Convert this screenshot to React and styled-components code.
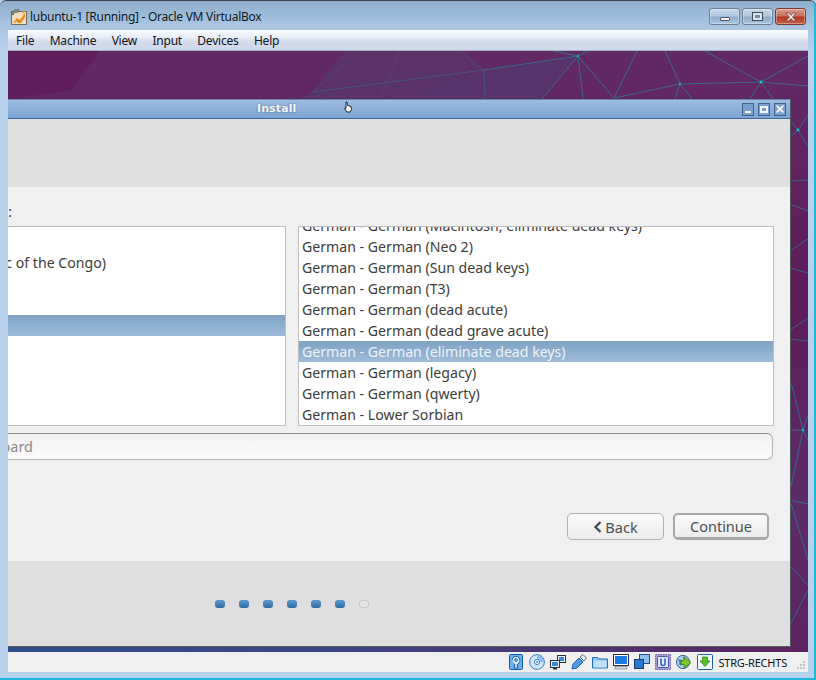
import React from "react";
import styled, { createGlobalStyle } from "styled-components";

const Global = createGlobalStyle`
  html, body { margin: 0; padding: 0; background: #b8d0ea; }
  * { box-sizing: border-box; }
`;

const Frame = styled.div`
  width: 816px; height: 680px; overflow: hidden;
  display: flex; flex-direction: column;
  padding: 0 0 0 8px;
  background: linear-gradient(180deg, #8eaecb 0, #a6c3df 22px, #b9d2ec 50px, #b9d2ec 100%);
  border-top: 1px solid #3a4650;
  border-top-left-radius: 6px; border-top-right-radius: 6px;
  box-shadow: inset -2px -2px 0 #1fb8d6;
  font-family: "Noto Sans", "Open Sans", sans-serif;
`;
const TitleBar = styled.div`
  height: 29px; margin-left: -8px; padding: 2px 10px 0 11px;
  display: flex; align-items: center;
`;
const AppLogo = styled.svg`width: 16px; height: 16px; flex: none; margin-right: 3px;`;
const TitleText = styled.span`
  font-size: 12px; color: #10181f; flex: 1; white-space: nowrap; letter-spacing: -0.27px;
`;
const CaptionButtons = styled.div`display: flex; gap: 2px;`;
const CaptionBtn = styled.div`
  width: 31px; height: 17px; border-radius: 3px;
  border: 1px solid ${p => (p.$close ? "#7a3a32" : "#6d7f92")};
  background: ${p => p.$close
    ? "linear-gradient(180deg,#dd9a8e 0,#c9705f 45%,#b03a22 55%,#c85e45 100%)"
    : "linear-gradient(180deg,#c6d8ea 0,#b1c8de 45%,#8fadcb 55%,#a9c6e0 100%)"};
  box-shadow: inset 0 0 0 1px rgba(255,255,255,.35);
  display: flex; align-items: center; justify-content: center;
`;
const MinGlyph = styled.div`width: 10px; height: 4px; margin-top: 5px; background: #f2f2f2; border: 1px solid #4f5a68; border-radius: 1px;`;
const MaxGlyph = styled.div`width: 11px; height: 9px; background: #dfe6ee; border: 1px solid #3f4a58; display:flex; align-items:center; justify-content:center;
  &::after { content:""; width: 5px; height: 3px; background:#6f8caa; }`;
const CloseGlyph = styled.svg`width: 12px; height: 10px;`;
const MenuBar = styled.div`
  width: 800px; height: 21px; display: flex; gap: 15.4px; align-items: center; padding-left: 8px;
  background: linear-gradient(180deg,#f8fafd 0,#e9eef7 35%,#d2daec 60%,#d0d9ec 100%);
  border-bottom: 1px solid #a5adc0;
  font-size: 12px; color: #10131a; letter-spacing: -0.22px;
`;
const Desktop = styled.div`
  position: relative; width: 800px; height: 601px; overflow: hidden; flex: none;
  background: #5f2660;
`;
const Wallpaper = styled.svg`position: absolute; inset: 0; width: 800px; height: 601px;`;
const InstallWindow = styled.div`
  position: absolute; left: 0; top: 48px; width: 783px; height: 548px;
  display: flex; flex-direction: column;
  border-right: 1px solid #4f5a5f; border-bottom: 1px solid #5a5f62;
`;
const WinTitle = styled.div`
  height: 20px; flex: none; display: flex; align-items: center; justify-content: flex-end; gap: 4px; padding-right: 4px;
  position: relative;
  background: linear-gradient(180deg,#9dbde2 0,#7da3d1 100%);
  border-top: 1px solid #68849f; border-bottom: 1px solid #43699b;
`;
const WinTitleText = styled.span`
  position: absolute; left: 249px; top: 2px;
  font: bold 11px "DejaVu Sans", sans-serif; color: #f2f5f8; letter-spacing: .1px;
  text-shadow: 0 0 2px rgba(70,90,120,.8);
`;
const WinBtn = styled.div`
  width: 12px; height: 13px; background: #7ba0cc; border: 1px solid #3f628f;
  display: flex; align-items: center; justify-content: center; color: #eef3f9;
`;
const WinMin = styled.div`width: 6px; height: 2px; margin-top: 5px; background: #f4f7fa;`;
const WinMax = styled.div`width: 8px; height: 7px; border: 2px solid #f4f7fa; background: #7ba0cc;`;
const WinClose = styled.svg`width: 8px; height: 8px;`;
const Banner = styled.div`height: 68px; flex: none; background: #e0e0e0;`;
const Content = styled.div`
  flex: 1; background: #f0f0f0; padding-right: 16px; display: flex; flex-direction: column;
  color: #3c3c3c; font-size: 14.13px; font-family: "Noto Sans", sans-serif;
`;
const Clip = styled.div`
  width: ${p => p.$w}px; height: 21px; line-height: 21px; display: flex; justify-content: flex-end; overflow: hidden; white-space: nowrap;
  flex: none;
  color: ${p => p.$muted ? "#8a8a8a" : "inherit"};
  ${p => p.$muted && "font-size: 14.5px;"}
`;
const LabelRow = styled.div`height: 39px; padding-top: 14px;`;
const Lists = styled.div`display: grid; grid-template-columns: 278px 476px; gap: 12px; height: 200px;`;
const ListBox = styled.div`
  background: #fff; border: 1px solid #bdbdbd; overflow: hidden;
  ${p => p.$clipLeft && "border-left: none; padding-top: 4px;"}
`;
const ScrolledRows = styled.div`margin-top: -12px;`;
const Row = styled.div`
  height: 21px; line-height: 21px; padding-left: ${p => p.$pad || 0}px; white-space: nowrap;
  ${p => p.$selected && "background: linear-gradient(180deg,#7fa2c3 0,#9dbcd9 100%); color: #f0f3f6;"}
`;
const SearchField = styled.div`
  margin-top: 7px; height: 27px; width: 765px; display: flex; align-items: center;
  background: linear-gradient(180deg,#f2f2f2 0,#fbfbfb 100%);
  border: 1px solid #b5b5b5; border-top-color: #8f8f8f; border-left: none;
  border-radius: 0 6px 6px 0;
`;
const Actions = styled.div`
  margin-top: 53px; display: flex; justify-content: flex-end; gap: 9px; padding-right: 5px;
`;
const Button = styled.div`
  width: 97px; height: 27px; border-radius: 5px; display: flex; align-items: center; justify-content: center; gap: 3px;
  font-size: 14.5px;
  background: linear-gradient(180deg,#fafafa 0,#ececec 100%);
  border: 1px solid #b2b2b2;
  ${p => p.$primary && "width: 96px; border: 2px solid #a8a8a8; border-bottom-width: 3px;"}
  color: #4a4f55;
`;
const Footer = styled.div`
  height: 85px; flex: none; background: #dfdfdf; display: flex; gap: 14px; padding: 39px 0 0 207px;
`;
const Dot = styled.div`
  width: 10px; height: 8px; border-radius: 3px;
  background: ${p => p.$off ? "#e4e4e4" : "linear-gradient(180deg,#5f97cc 0,#2c69a6 100%)"};
  border: ${p => p.$off ? "1px solid #c8c8c8" : "none"};
`;
const Cursor = styled.svg`position: absolute; left: 335px; top: 50px; width: 10px; height: 12px;`;
const StatusBar = styled.div`
  width: 800px; height: 20px; flex: none; background: #f0f0f0;
  display: flex; align-items: center; justify-content: flex-end; position: relative;
  padding-right: 21px; gap: 5px;
  font-size: 11px; color: #0c1420; letter-spacing: -0.2px;
`;
const StatusIcon = styled.svg`width: 16px; height: 16px; flex: none;`;
const HostKey = styled.span`white-space: nowrap;`;
const Grip = styled.svg`position: absolute; right: 2px; bottom: 2px; width: 10px; height: 10px;`;

const L = [
  [578,56,484,70],[484,70,460,51],[484,70,485,99],[484,70,313,92],[578,56,553,51],[578,56,588,51],
  [578,56,542,99],[578,56,583,99],[578,56,614,98],[614,98,637,51],[614,98,680,84],[680,84,665,51],
  [680,84,675,99],[680,84,692,99],[680,84,761,82],[761,82,705,51],[761,82,808,56],[761,82,808,86],
  [761,82,750,99],[761,82,773,99],
  [798,130,808,115],[798,130,808,147],[798,130,790,120],[798,130,790,137],
  [790,181,808,180],[790,204,808,211],[790,251,808,239],[790,268,808,273],[790,330,808,318],[790,339,808,341],
  [790,380,793,390],[793,390,803,430],[803,430,808,415],[803,430,808,440],[803,430,790,430],[803,430,791,487],
  [790,500,808,504],[791,503,808,560],[791,567,808,585],[808,590,791,623],
  [313,92,346,51],[313,92,359,51],[313,92,300,99],[313,92,325,99],[380,99,400,51],
];

const rightRows = [
  "German - German (Macintosh, eliminate dead keys)",
  "German - German (Neo 2)",
  "German - German (Sun dead keys)",
  "German - German (T3)",
  "German - German (dead acute)",
  "German - German (dead grave acute)",
  "German - German (eliminate dead keys)",
  "German - German (legacy)",
  "German - German (qwerty)",
  "German - Lower Sorbian",
];

const Disk = () => (
  <StatusIcon viewBox="0 0 16 16">
    <rect x="1.5" y="0.5" width="13" height="15" rx="1" fill="#6db0ea" stroke="#0e5aa8" />
    <path d="M4 6a4 4 0 1 1 7 3l-2 2 1 3H6l1-4" fill="#d7ebfb" stroke="#0e5aa8" />
    <circle cx="8" cy="6" r="1.4" fill="#6db0ea" stroke="#0e5aa8" strokeWidth=".7" />
  </StatusIcon>
);
const Disc = () => (
  <StatusIcon viewBox="0 0 16 16">
    <circle cx="8" cy="8" r="7.4" fill="#cfe6fa" stroke="#3b7fc4" />
    <path d="M8 1a7 7 0 0 1 7 7H11a3 3 0 0 0-3-3z" fill="#88bdf0" />
    <circle cx="8" cy="8" r="2.6" fill="#f4fbff" stroke="#3b7fc4" />
    <circle cx="8" cy="8" r=".9" fill="#3b7fc4" />
  </StatusIcon>
);
const Net = () => (
  <StatusIcon viewBox="0 0 16 16">
    <rect x="7.5" y="1.5" width="8" height="7" fill="#eef5fc" stroke="#24303c" />
    <rect x="9" y="3" width="5" height="4" fill="#3b86d8" />
    <rect x="0.5" y="6.5" width="9" height="7" fill="#eef5fc" stroke="#24303c" />
    <rect x="2" y="8" width="6" height="4" fill="#3b86d8" />
    <rect x="3" y="14" width="4" height="1.5" fill="#24303c" />
  </StatusIcon>
);
const Usb = () => (
  <StatusIcon viewBox="0 0 16 16">
    <path d="M1 15l1-5 6-6 4 4-6 6z" fill="#4f9ae6" stroke="#1a62b0" />
    <path d="M9 3l3-2.5 3.5 3.500L13 7z" fill="#e8eef4" stroke="#5b6a78" />
  </StatusIcon>
);
const Folder = () => (
  <StatusIcon viewBox="0 0 16 16">
    <path d="M.5 14V3.500h5l1 1.500h9v9z" fill="#8fc6f5" stroke="#1c6dbd" />
    <rect x="1.5" y="6.500" width="13" height="7" fill="#bfe0fb" />
  </StatusIcon>
);
const Display = () => (
  <StatusIcon viewBox="0 0 16 16">
    <rect x="0.5" y="0.5" width="15" height="11" fill="#fff" stroke="#24303c" />
    <rect x="2" y="2" width="12" height="8" fill="#1f7ae0" />
    <rect x="2" y="12.500" width="12" height="2.500" fill="#d0d6dc" stroke="#5c6670" strokeWidth=".5" />
  </StatusIcon>
);
const Capture = () => (
  <StatusIcon viewBox="0 0 16 16">
    <rect x="5.500" y="0.5" width="10" height="9" fill="#8cc0f2" stroke="#1f4f86" />
    <rect x="0.5" y="5.500" width="9" height="9" fill="#2a78d4" stroke="#1f3f6a" />
  </StatusIcon>
);
const Chip = () => (
  <StatusIcon viewBox="0 0 16 16">
    <rect x="0.5" y="0.5" width="15" height="15" fill="#a99ad8" stroke="#6a5ab0" strokeDasharray="1.5 1" />
    <rect x="2.500" y="2.500" width="11" height="11" rx="1" fill="#dfe7fb" stroke="#4c55a8" />
    <path d="M6 4.500v5a2 2 0 0 0 4 0v-5" fill="none" stroke="#3c62b8" strokeWidth="1.6" />
  </StatusIcon>
);
const Globe = () => (
  <StatusIcon viewBox="0 0 16 16">
    <circle cx="7" cy="8" r="6.600" fill="#a9d2f4" stroke="#3a5f8c" />
    <path d="M2 5l4 1 1 3-3 3zM7 2l3 2-2 2z" fill="#4c7fb4" />
    <path d="M8 3l7 5.500-7 5.500v-3.500H5v-4h3z" fill="#7cc82e" stroke="#3f7a10" strokeWidth=".8" />
  </StatusIcon>
);
const Guest = () => (
  <StatusIcon viewBox="0 0 16 16">
    <rect x="0.5" y="0.5" width="15" height="15" rx="1" fill="#f2f8fd" stroke="#1a5fa8" />
    <path d="M5.500 3h5v4h2.500L8 12.500 3 7h2.500z" fill="#58c030" stroke="#2c7a12" strokeWidth=".7" />
  </StatusIcon>
);

export default function App() {
  return (
    <Frame>
      <Global />
      <TitleBar>
        <AppLogo viewBox="0 0 16 16">
          <rect x="0.5" y="2.500" width="15" height="13" fill="#f0e0c0" stroke="#7a6a58" />
          <path d="M2 14l4-5 3 2 5-7v4l-4 6H7L5 12l-1 2z" fill="#e88a1c" />
          <path d="M1 3l3-2.500h4l-1 3H3v2H1z" fill="#8c8c8c" stroke="#555" strokeWidth=".5" />
          <path d="M11 3l3-1-1 4z" fill="#f6b44a" />
        </AppLogo>
        <TitleText>lubuntu-1 [Running] - Oracle VM VirtualBox</TitleText>
        <CaptionButtons>
          <CaptionBtn><MinGlyph /></CaptionBtn>
          <CaptionBtn><MaxGlyph /></CaptionBtn>
          <CaptionBtn $close>
            <CloseGlyph viewBox="0 0 12 10">
              <path d="M1 1h2.500L6 3.500 8.500 1H11L7.500 5 11 9H8.500L6 6.500 3.500 9H1l3.500-4z" fill="#f4f4f4" stroke="#5b3a36" strokeWidth=".7" />
            </CloseGlyph>
          </CaptionBtn>
        </CaptionButtons>
      </TitleBar>
      <MenuBar>
        <span>File</span><span>Machine</span><span>View</span><span>Input</span><span>Devices</span><span>Help</span>
      </MenuBar>
      <Desktop>
        <Wallpaper viewBox="8 51 800 601">
          <defs>
            <linearGradient id="strip" x1="0" x2="0" y1="0" y2="1">
              <stop offset="0" stopColor="#612a63" />
              <stop offset=".4" stopColor="#5e1b5a" />
              <stop offset=".75" stopColor="#5c2b66" />
              <stop offset="1" stopColor="#5d2260" />
            </linearGradient>
            <linearGradient id="base" x1="0" x2="1" y1="0" y2="0">
              <stop offset="0" stopColor="#2f4d8a" />
              <stop offset=".4" stopColor="#3b4684" />
              <stop offset="1" stopColor="#5b2560" />
            </linearGradient>
          </defs>
          <rect x="8" y="51" width="800" height="601" fill="url(#strip)" />
          <polygon points="8,51 100,51 72,90 8,99" fill="#601f5c" />
          <polygon points="313,92 346,51 460,51 484,70 380,99 300,99" fill="#5a3268" />
          <polygon points="380,99 484,70 578,56 542,99" fill="#583369" />
          <rect x="8" y="646" width="783" height="6" fill="url(#base)" />
          {L.map(([a, b, c, d], i) => (
            <line key={i} x1={a} y1={b} x2={c} y2={d} stroke="#2e7c94" strokeOpacity={a < 460 ? 0.25 : a < 520 ? 0.45 : 0.75} strokeWidth="1" />
          ))}
          <circle cx="578" cy="56" r="1.2" fill="#20a8b8" />
          <circle cx="680" cy="84" r="1.2" fill="#20a8b8" />
          <circle cx="761" cy="82" r="1.4" fill="#10c8d0" />
          <circle cx="798" cy="130" r="1.4" fill="#10c8d0" />
          <circle cx="803" cy="430" r="1.4" fill="#10b0c0" />
        </Wallpaper>
        <InstallWindow>
          <WinTitle>
            <WinTitleText>Install</WinTitleText>
            <WinBtn><WinMin /></WinBtn>
            <WinBtn><WinMax /></WinBtn>
            <WinBtn>
              <WinClose viewBox="0 0 8 8"><path d="M0 1l1-1 3 2.500L7 0l1 1-2.500 3L8 7 7 8 4 5.500 1 8 0 7l2.500-3z" fill="#f4f7fa" /></WinClose>
            </WinBtn>
          </WinTitle>
          <Banner />
          <Content>
            <LabelRow><Clip $w={4}>Choose your keyboard layout:</Clip></LabelRow>
            <Lists>
              <ListBox $clipLeft>
                <Row />
                <Row><Clip $w={98}>French (Democratic Republic of the Congo)</Clip></Row>
                <Row /><Row />
                <Row $selected />
              </ListBox>
              <ListBox>
                <ScrolledRows>
                  {rightRows.map((r, i) => (
                    <Row key={r} $pad={3} $selected={i === 6}>{r}</Row>
                  ))}
                </ScrolledRows>
              </ListBox>
            </Lists>
            <SearchField><Clip $w={25} $muted>Type here to test your keyboard</Clip></SearchField>
            <Actions>
              <Button>
                <svg width="9" height="12" viewBox="0 0 9 12"><path d="M7.500 1L2.500 6l5 5" fill="none" stroke="#4a4f55" strokeWidth="2.400" /></svg>
                Back
              </Button>
              <Button $primary>Continue</Button>
            </Actions>
          </Content>
          <Footer>
            {[0, 1, 2, 3, 4, 5].map(i => <Dot key={i} />)}
            <Dot $off />
          </Footer>
        </InstallWindow>
        <Cursor viewBox="0 0 10 12">
          <path d="M3 1l1 0 .5 3.500 3.500 1 .5 3-1.500 2.500H4L1.500 7.500 2.500 7 3 7.500z" fill="#fff" stroke="#111" strokeWidth=".9" />
        </Cursor>
      </Desktop>
      <StatusBar>
        <Disk /><Disc /><Net /><Usb /><Folder /><Display /><Capture /><Chip /><Globe /><Guest />
        <HostKey>STRG-RECHTS</HostKey>
        <Grip viewBox="0 0 10 10">
          <g fill="#c0c4c8">
            <rect x="7" y="1" width="2" height="2" /><rect x="4" y="4" width="2" height="2" /><rect x="7" y="4" width="2" height="2" />
            <rect x="1" y="7" width="2" height="2" /><rect x="4" y="7" width="2" height="2" /><rect x="7" y="7" width="2" height="2" />
          </g>
        </Grip>
      </StatusBar>
    </Frame>
  );
}
